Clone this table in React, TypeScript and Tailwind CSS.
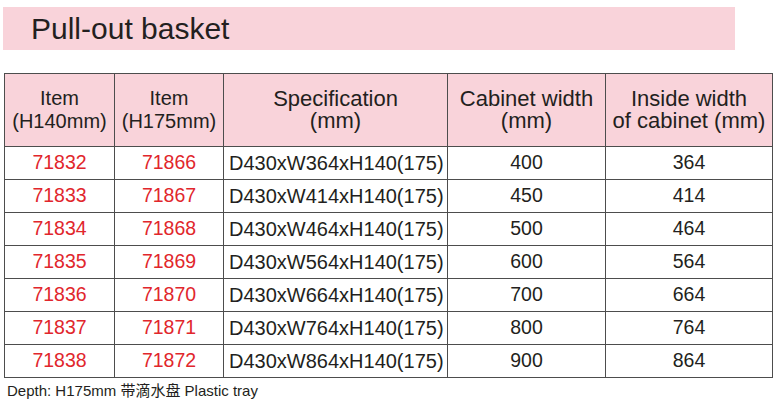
import React from "react";

const rows = [
  ["71832", "71866", "D430xW364xH140(175)", "400", "364"],
  ["71833", "71867", "D430xW414xH140(175)", "450", "414"],
  ["71834", "71868", "D430xW464xH140(175)", "500", "464"],
  ["71835", "71869", "D430xW564xH140(175)", "600", "564"],
  ["71836", "71870", "D430xW664xH140(175)", "700", "664"],
  ["71837", "71871", "D430xW764xH140(175)", "800", "764"],
  ["71838", "71872", "D430xW864xH140(175)", "900", "864"],
];

export default function App() {
  return (
    <div
      className="w-[780px] h-[410px] bg-white text-[#231f20] overflow-hidden"
      style={{ fontFamily: '"Liberation Sans", "Noto Sans CJK SC", sans-serif' }}
    >
      <div className="pt-[7px] pl-[3px]">
        <div className="w-[732px] h-[43px] bg-[#f9d3da] pl-[28px] flex items-center">
          <span className="text-[30px] leading-none mt-[1px]">Pull-out basket</span>
        </div>
      </div>
      <div className="pl-[4px] pt-[23px]">
        <table className="table-fixed border-collapse w-[768px]">
          <colgroup>
            <col className="w-[110px]" />
            <col className="w-[109px]" />
            <col className="w-[224px]" />
            <col className="w-[158px]" />
            <col className="w-[167px]" />
          </colgroup>
          <thead>
            <tr className="h-[73px] bg-[#f9d3da]">
              <th className="border border-[#4d4d4d] font-normal text-[20px] leading-[23px] text-center p-0">
                Item
                <br />
                (H140mm)
              </th>
              <th className="border border-[#4d4d4d] font-normal text-[20px] leading-[23px] text-center p-0">
                Item
                <br />
                (H175mm)
              </th>
              <th className="border border-[#4d4d4d] font-normal text-[22px] leading-[22px] text-center p-0">
                Specification
                <br />
                (mm)
              </th>
              <th className="border border-[#4d4d4d] font-normal text-[22px] leading-[22px] text-center p-0">
                Cabinet width
                <br />
                (mm)
              </th>
              <th className="border border-[#4d4d4d] font-normal text-[22px] leading-[22px] text-center p-0">
                Inside width
                <br />
                of cabinet (mm)
              </th>
            </tr>
          </thead>
          <tbody>
            {rows.map((r) => (
              <tr key={r[0]} className="h-[33px]">
                <td className="border border-[#4d4d4d] text-center text-[19.5px] leading-none text-[#e1262c] p-0">
                  {r[0]}
                </td>
                <td className="border border-[#4d4d4d] text-center text-[19.5px] leading-none text-[#e1262c] p-0">
                  {r[1]}
                </td>
                <td className="border border-[#4d4d4d] text-left text-[20px] leading-none pl-[5px] p-0">
                  {r[2]}
                </td>
                <td className="border border-[#4d4d4d] text-center text-[19.5px] leading-none p-0">
                  {r[3]}
                </td>
                <td className="border border-[#4d4d4d] text-center text-[19.5px] leading-none p-0">
                  {r[4]}
                </td>
              </tr>
            ))}
          </tbody>
        </table>
      </div>
      <div className="pl-[7px] pt-[4px] text-[15px] leading-[18px]">
        Depth: H175mm 带滴水盘 Plastic tray
      </div>
    </div>
  );
}
